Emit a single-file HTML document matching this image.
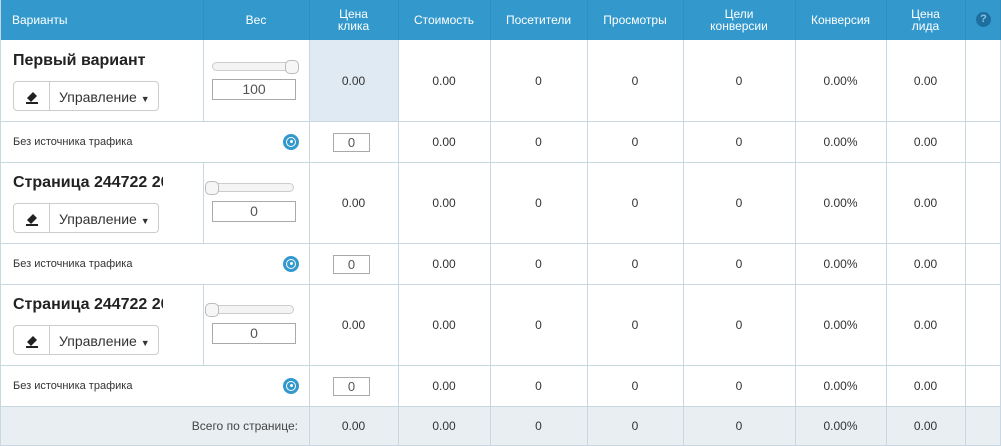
<!DOCTYPE html><html><head><meta charset="utf-8"><style>
*{box-sizing:border-box;margin:0;padding:0}
body{width:1001px;height:445px;overflow:hidden;background:#fff;font-family:"Liberation Sans",Arial,sans-serif;position:relative;color:#333}
.a{position:absolute}
.hd{position:absolute;top:0;left:0;width:1001px;height:40px;background:#3399cc}
.ht{position:absolute;color:#fff;font-size:12px;text-align:center;line-height:12px;display:flex;align-items:center;justify-content:center;height:40px;top:0}
.vl{position:absolute;width:1px;background:#c9d7e0}
.hl{position:absolute;height:1px;left:0;width:1001px;background:#c9d7e0}
.c{position:absolute;font-size:12px;text-align:center;color:#333}
.name{position:absolute;left:13px;font-size:16px;font-weight:bold;color:#222;width:150px;overflow:hidden;white-space:nowrap}
.btn{position:absolute;left:13px;width:146px;height:30px;border:1px solid #ccc;border-radius:4px;background:#fff}
.btn .s{position:absolute;left:35px;top:0;width:1px;height:28px;background:#ccc}
.btn .t{position:absolute;left:45px;top:7px;font-size:14px;color:#333}
.inp{position:absolute;border:1px solid #aaa;background:#fff;font-size:13px;text-align:center;color:#555}
.sl{position:absolute;height:9px;border:1px solid #ccc;border-radius:5px;background:#f4f4f4}
.th{position:absolute;width:14px;height:14px;border:1px solid #bbb;border-radius:5px;background:#f6f6f6}
.tr{position:absolute;left:13px;font-size:11px;color:#333}
</style></head><body>
<div class="hd"></div>
<div class="ht" style="left:12px;justify-content:flex-start">Варианты</div>
<div class="ht" style="left:203px;width:106px">Вес</div>
<div class="ht" style="left:309px;width:89px">Цена<br>клика</div>
<div class="ht" style="left:398px;width:92px">Стоимость</div>
<div class="ht" style="left:490px;width:97px">Посетители</div>
<div class="ht" style="left:587px;width:96px">Просмотры</div>
<div class="ht" style="left:683px;width:112px">Цели<br>конверсии</div>
<div class="ht" style="left:795px;width:91px">Конверсия</div>
<div class="ht" style="left:886px;width:79px">Цена<br>лида</div>
<div class="a" style="left:976px;top:12px;width:15px;height:15px;border-radius:8px;background:#1d6fa0;color:#8cc3e3;font-size:11px;font-weight:bold;text-align:center;line-height:15px">?</div>
<div class="a" style="left:309px;top:40px;width:89px;height:81px;background:#dfeaf2"></div>
<div class="a" style="left:0;top:406px;width:1001px;height:39px;background:#e9eef2"></div>
<div id="g"></div>
<script>
var cols=[203,309,398,490,587,683,795,886,965,1000];
var cx=[353.5,444,538.5,635,739,840.5,925.5];
var h='';
cols.forEach(function(x){h+='<div class="vl" style="left:'+x+'px;top:0;height:40px;background:#2f8fc0"></div>';});
h+='<div class="vl" style="left:0;top:0;height:445px"></div>';
var rows=[[40,121,'v'],[121,162,'t'],[162,243,'v'],[243,284,'t'],[284,365,'v'],[365,406,'t'],[406,445,'s']];
var names=['Первый вариант','Страница 244722 2017','Страница 244722 2017'];var vi=0;
rows.forEach(function(r){
 var y=r[0],y2=r[1],m=(y+y2)/2;
 h+='<div class="hl" style="top:'+y2+'px"></div>';
 cols.forEach(function(x,i){ if(i==0&&r[2]!='v')return; h+='<div class="vl" style="left:'+x+'px;top:'+y+'px;height:'+(y2-y)+'px"></div>';});
 var vals=['0.00','0.00','0','0','0','0.00%','0.00'];
 vals.forEach(function(v,i){ if(i==0&&r[2]=='t'){h+='<div class="inp" style="left:333px;top:'+(m-9)+'px;width:37px;height:19px;line-height:17px">0</div>';return;}
  h+='<div class="c" style="left:'+(cx[i]-45)+'px;width:90px;top:'+(m-7)+'px">'+v+'</div>';});
 if(r[2]=='v'){
  var first=vi==0;
  h+='<div class="name" style="top:'+(y+12)+'px">'+names[vi]+'</div>';
  h+='<div class="btn" style="top:'+(y+41)+'px"><svg class="a" style="left:10px;top:6px" width="16" height="16" viewBox="0 0 16 16"><path d="M3 10 L9 4 L13 8 L7 14 Z" fill="#222"/><rect x="2" y="14" width="12" height="2" fill="#222"/></svg><div class="s"></div><div class="t">Управление <span style="font-size:9px">&#9660;</span></div></div>';
  if(first){h+='<div class="sl" style="left:212px;top:'+(y+22)+'px;width:87px"></div><div class="th" style="left:285px;top:'+(y+20)+'px"></div>';}
  else{h+='<div class="sl" style="left:205px;top:'+(y+21)+'px;width:89px"></div><div class="th" style="left:205px;top:'+(y+19)+'px"></div>';}
  h+='<div class="inp" style="left:212px;top:'+(y+39)+'px;width:84px;height:21px;line-height:19px;font-size:14px">'+(first?'100':'0')+'</div>';
  vi++;
 } else if(r[2]=='t'){
  h+='<div class="tr" style="top:'+(m-6)+'px">Без источника трафика</div>';
  h+='<div class="a" style="left:283px;top:'+(m-8)+'px;width:16px;height:16px;border-radius:8px;background:#3399cc"></div><div class="a" style="left:286px;top:'+(m-5)+'px;width:10px;height:10px;border-radius:5px;border:1.5px solid #fff"></div><div class="a" style="left:289.5px;top:'+(m-1.5)+'px;width:3px;height:3px;border-radius:2px;background:#fff"></div>';
 } else {
  h+='<div class="c" style="left:100px;width:198px;text-align:right;top:'+(m-7)+'px;color:#444">Всего по странице:</div>';
 }
});
document.getElementById('g').innerHTML=h;
</script>
</body></html>
